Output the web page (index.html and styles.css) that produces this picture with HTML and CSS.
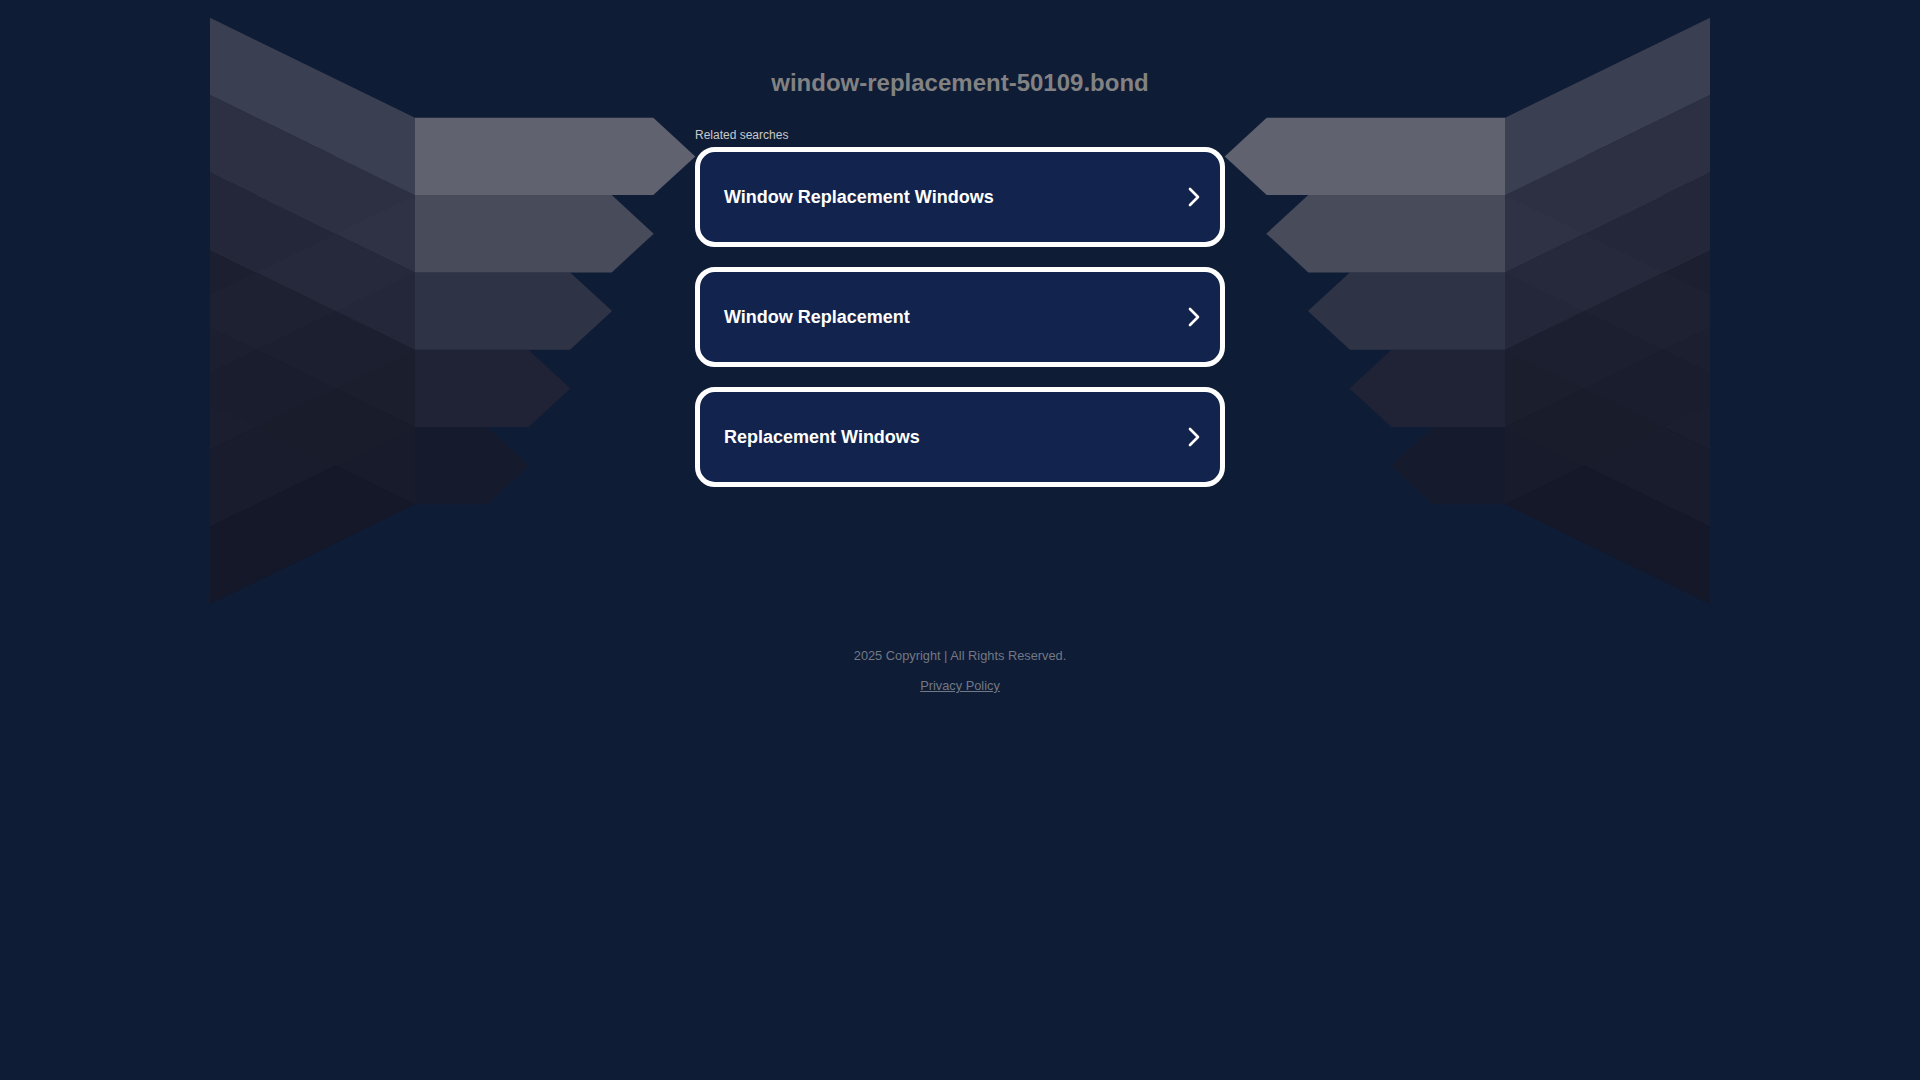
FILE: index.html
```html
<!DOCTYPE html>
<html lang="en">
<head>
<meta charset="utf-8">
<title>window-replacement-50109.bond</title>
<link rel="stylesheet" href="styles.css">
</head>
<body>
<div class="page">
  <svg class="wings" width="1500" height="620" viewBox="210 0 1500 620" aria-hidden="true">
    <g id="wing">
      <g class="ups">
        <polygon fill="#3a3f51" points="210,217.7 415,117.7 415,195 210,295"/>
        <polygon fill="#1d2032" points="210,295 415,195 415,272.4 210,372.4"/>
        <polygon fill="#1b1e2e" points="210,372.4 415,272.4 415,349.7 210,449.7"/>
        <polygon fill="#191d2e" points="210,449.7 415,349.7 415,427 210,527"/>
        <polygon fill="#15192a" points="210,527 415,427 415,504.3 210,604.3"/>
      </g>
      <g class="downs">
        <polygon fill="#1a1d2d" points="210,327 415,427 415,504.3 210,404.3"/>
        <polygon fill="#1c1f2f" points="210,249.7 415,349.7 415,427 210,327"/>
        <polygon fill="#232739" points="210,172.4 415,272.4 415,349.7 210,249.7"/>
        <polygon fill="#2c3042" points="210,95 415,195 415,272.4 210,172.4"/>
        <polygon fill="#3a3f51" points="210,17.7 415,117.7 415,195 210,95"/>
      </g>
      <g class="overlay">
        <polygon fill="#ffffff" fill-opacity="0.012" points="210,295 415,195 415,272.4 210,372.4"/>
        <polygon fill="#000000" fill-opacity="0.03" points="210,449.7 415,349.7 415,427 210,527"/>
        <polygon fill="#000000" fill-opacity="0.04" points="210,527 415,427 415,504.3 210,604.3"/>
      </g>
      <g class="feathers">
        <polygon fill="#151a2c" points="415,427 486.9,427 528.9,465.7 486.9,504.3 415,504.3"/>
        <polygon fill="#1f2335" points="415,349.7 528.5,349.7 570.5,388.4 528.5,427 415,427"/>
        <polygon fill="#2f3346" points="415,272.4 570.1,272.4 612.1,311.1 570.1,349.7 415,349.7"/>
        <polygon fill="#484b5a" points="415,195 611.7,195 653.7,233.7 611.7,272.4 415,272.4"/>
        <polygon fill="#60636f" points="415,117.7 653.3,117.7 695.3,156.4 653.3,195 415,195"/>
      </g>
    </g>
    <use href="#wing" transform="translate(1920 0) scale(-1 1)"/>
  </svg>

  <main class="content">
    <h1 class="domain">window-replacement-50109.bond</h1>
    <section class="related">
      <p class="related-title">Related searches</p>
      <ul class="links">
        <li>
          <a class="link" href="#">
            <span class="link-text">Window Replacement Windows</span>
            <svg class="chevron" width="12" height="20" viewBox="0 0 12 20"><path d="M2 2 L10 10 L2 18" fill="none" stroke="#ffffff" stroke-width="2.6" stroke-linecap="round" stroke-linejoin="round"/></svg>
          </a>
        </li>
        <li>
          <a class="link" href="#">
            <span class="link-text">Window Replacement</span>
            <svg class="chevron" width="12" height="20" viewBox="0 0 12 20"><path d="M2 2 L10 10 L2 18" fill="none" stroke="#ffffff" stroke-width="2.6" stroke-linecap="round" stroke-linejoin="round"/></svg>
          </a>
        </li>
        <li>
          <a class="link" href="#">
            <span class="link-text">Replacement Windows</span>
            <svg class="chevron" width="12" height="20" viewBox="0 0 12 20"><path d="M2 2 L10 10 L2 18" fill="none" stroke="#ffffff" stroke-width="2.6" stroke-linecap="round" stroke-linejoin="round"/></svg>
          </a>
        </li>
      </ul>
    </section>
  </main>

  <footer class="footer">
    <p class="copyright">2025 Copyright | All Rights Reserved.</p>
    <a class="privacy" href="#">Privacy Policy</a>
  </footer>
</div>
</body>
</html>
```

FILE: styles.css
```css
html, body {
  margin: 0;
  padding: 0;
  background: #0f1c36;
  font-family: "Liberation Sans", Arial, sans-serif;
}

.page {
  position: relative;
  min-height: 1080px;
  display: flex;
  flex-direction: column;
  align-items: center;
}

.wings {
  position: absolute;
  top: 0;
  left: 50%;
  transform: translateX(-50%);
  z-index: 0;
}

.content {
  position: relative;
  z-index: 1;
  display: flex;
  flex-direction: column;
  align-items: center;
  padding-top: 69px;
}

.domain {
  margin: 0;
  font-size: 24px;
  line-height: 28px;
  font-weight: bold;
  color: #828282;
}

.related {
  width: 530px;
  margin-top: 31px;
}

.related-title {
  margin: 0 0 5px 0;
  font-size: 12px;
  line-height: 14px;
  color: #c9c9c9;
}

.links {
  list-style: none;
  margin: 0;
  padding: 0;
  display: flex;
  flex-direction: column;
  gap: 20px;
}

.link {
  box-sizing: border-box;
  height: 100px;
  display: flex;
  align-items: center;
  justify-content: space-between;
  padding: 0 20px 0 24px;
  background: #12244d;
  border: 5px solid #ffffff;
  border-radius: 20px;
  text-decoration: none;
}

.link-text {
  font-size: 18px;
  font-weight: bold;
  color: #ffffff;
}

.chevron {
  display: block;
}

.footer {
  position: relative;
  z-index: 1;
  display: flex;
  flex-direction: column;
  align-items: center;
  padding-top: 161px;
  font-size: 12.8px;
  line-height: 15px;
}

.copyright {
  margin: 0;
  color: #727884;
}

.privacy {
  margin-top: 15px;
  color: #727884;
  text-decoration: underline;
}
```
